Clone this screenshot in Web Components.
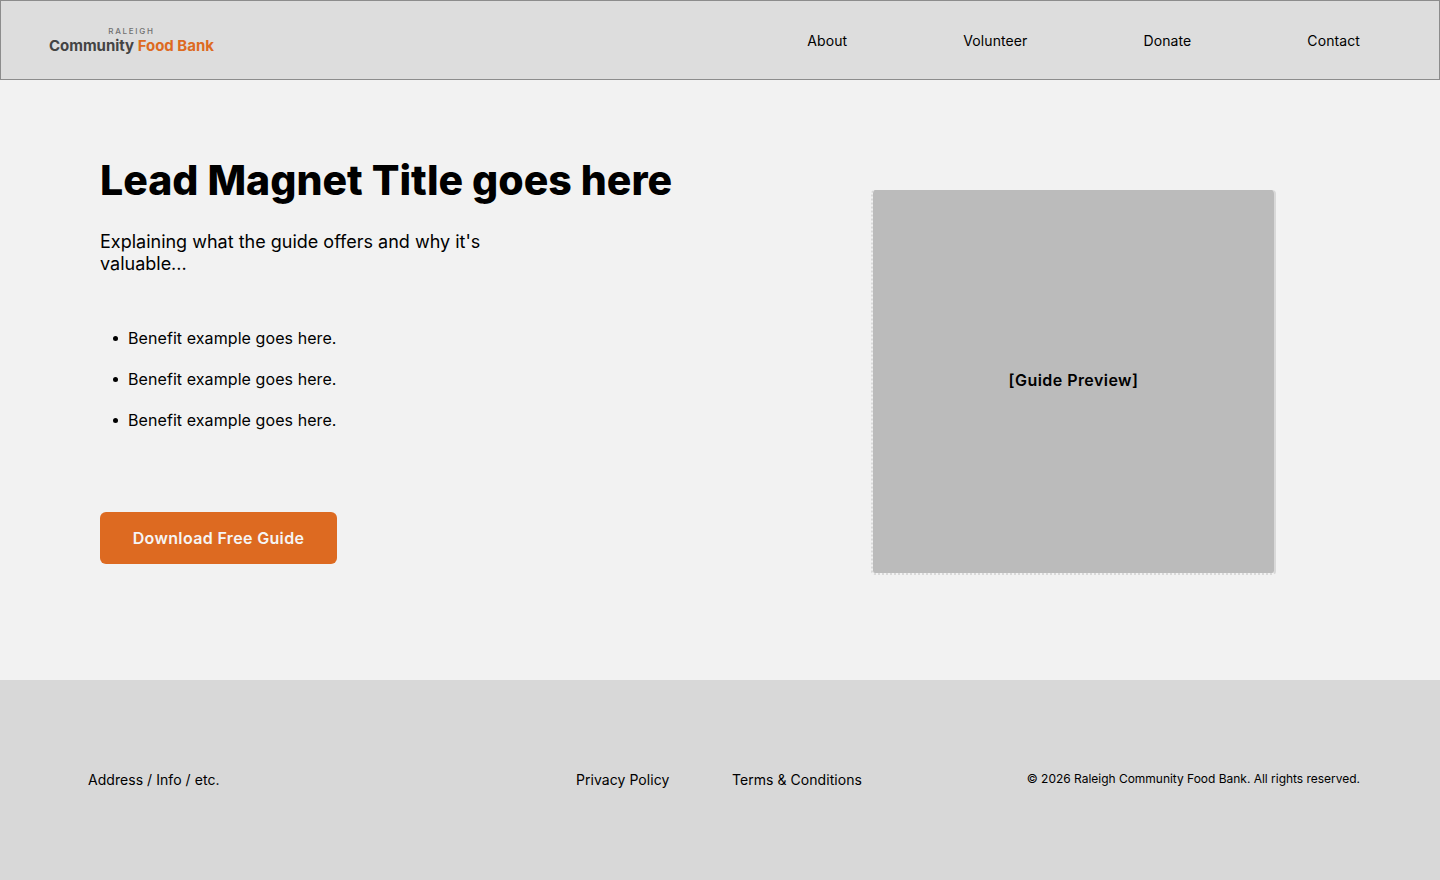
<!DOCTYPE html>
<html lang="en">
<head>
<meta charset="utf-8">
<title>Raleigh Community Food Bank</title>
<style>
  html, body { margin: 0; padding: 0; }
  body { width: 1440px; height: 880px; overflow: hidden; font-family: Inter, "Liberation Sans", sans-serif; color: #000; }
</style>
</head>
<body>
<site-header>
  <nav-link>About</nav-link>
  <nav-link>Volunteer</nav-link>
  <nav-link>Donate</nav-link>
  <nav-link>Contact</nav-link>
</site-header>
<lead-hero>
  <span slot="title">Lead Magnet Title goes here</span>
  <span slot="intro">Explaining what the guide offers and why it's valuable...</span>
  <benefit-item>Benefit example goes here.</benefit-item>
  <benefit-item>Benefit example goes here.</benefit-item>
  <benefit-item>Benefit example goes here.</benefit-item>
  <span slot="cta">Download Free Guide</span>
  <span slot="preview">[Guide Preview]</span>
</lead-hero>
<site-footer></site-footer>

<script>
(() => {
  const HEAD_FONT = 'Inter, "Open Sans", sans-serif';

  // Small helper so each element only declares its markup
  const define = (name, html) => {
    const template = document.createElement('template');
    template.innerHTML = html;
    customElements.define(name, class extends HTMLElement {
      constructor() {
        super();
        this.attachShadow({ mode: 'open' });
        this.shadowRoot.appendChild(template.content.cloneNode(true));
      }
    });
  };

  define('nav-link', `
    <style>
      :host { display: block; font-size: 14px; line-height: 20px; letter-spacing: 0.1px; color: #000; }
    </style>
    <slot></slot>
  `);

  define('site-header', `
    <style>
      :host {
        box-sizing: border-box;
        display: flex;
        align-items: center;
        justify-content: space-between;
        height: 80px;
        padding: 2px 79px 0 48px;
        background: #ddd;
        border: 1px solid #8c8c8c;
      }
      .logo { display: flex; flex-direction: column; align-items: center; font-family: ${HEAD_FONT}; margin-top: -1px; }
      .logo small { font: 500 8px/11px Inter, sans-serif; letter-spacing: 1.7px; color: #707070; }
      .logo b { font-size: 15px; line-height: 18px; font-weight: 700; letter-spacing: -0.02px; color: #444; white-space: nowrap; }
      .logo i { font-style: normal; color: #dd6a21; }
      nav { display: flex; gap: 116px; }
    </style>
    <div class="logo">
      <small>RALEIGH</small>
      <b>Community <i>Food Bank</i></b>
    </div>
    <nav><slot></slot></nav>
  `);

  define('benefit-item', `
    <style>
      :host { display: flex; align-items: center; font-size: 16px; line-height: 24px; letter-spacing: 0.08px; }
      :host::before {
        content: "";
        width: 5px;
        height: 5px;
        margin: 1px 10px 0 13px;
        border-radius: 50%;
        background: #000;
      }
    </style>
    <slot></slot>
  `);

  define('lead-hero', `
    <style>
      :host {
        box-sizing: border-box;
        display: flex;
        justify-content: space-between;
        height: 600px;
        padding: 69px 164px 0 100px;
        background: #f2f2f2;
      }
      .copy { display: flex; flex-direction: column; }
      h1 { margin: 0; font: 800 41px/62px ${HEAD_FONT}; color: #000; white-space: nowrap; }
      .intro { width: 400px; margin-top: 20px; font-size: 18px; line-height: 22px; }
      .list { display: flex; flex-direction: column; gap: 17px; margin-top: 51px; }
      .cta {
        align-self: flex-start;
        box-sizing: border-box;
        width: 237px;
        height: 52px;
        margin-top: 80px;
        border-radius: 6px;
        background: #dd6a21;
        color: #f5f5f5;
        font: 600 16px/52px ${HEAD_FONT};
        letter-spacing: 0.35px;
        text-align: center;
      }
      .preview {
        box-sizing: border-box;
        display: flex;
        align-items: center;
        justify-content: center;
        width: 405px;
        height: 385px;
        margin-top: 41px;
        padding-bottom: 4px;
        border: 2px dotted #d9d9d9;
        border-top: 0;
        border-right-style: solid;
        border-radius: 4px;
        background: #bbb padding-box;
        font: 600 16px/24px ${HEAD_FONT};
        letter-spacing: 0.45px;
        color: #000;
      }
    </style>
    <div class="copy">
      <h1><slot name="title"></slot></h1>
      <div class="intro"><slot name="intro"></slot></div>
      <div class="list"><slot></slot></div>
      <div class="cta"><slot name="cta"></slot></div>
    </div>
    <div class="preview"><slot name="preview"></slot></div>
  `);

  define('site-footer', `
    <style>
      :host {
        box-sizing: border-box;
        display: grid;
        grid-template-columns: 488px 156px 1fr auto;
        align-items: center;
        height: 200px;
        padding: 0 80px 0 88px;
        background: #d8d8d8;
        font-size: 14px;
        line-height: 20px;
        letter-spacing: 0.05px;
        color: #000;
      }
      .legal { font-size: 12px; letter-spacing: -0.02px; margin-top: -3px; }
    </style>
    <div>Address / Info / etc.</div>
    <div>Privacy Policy</div>
    <div>Terms &amp; Conditions</div>
    <div class="legal">© 2026 Raleigh Community Food Bank. All rights reserved.</div>
  `);
})();
</script>
</body>
</html>
